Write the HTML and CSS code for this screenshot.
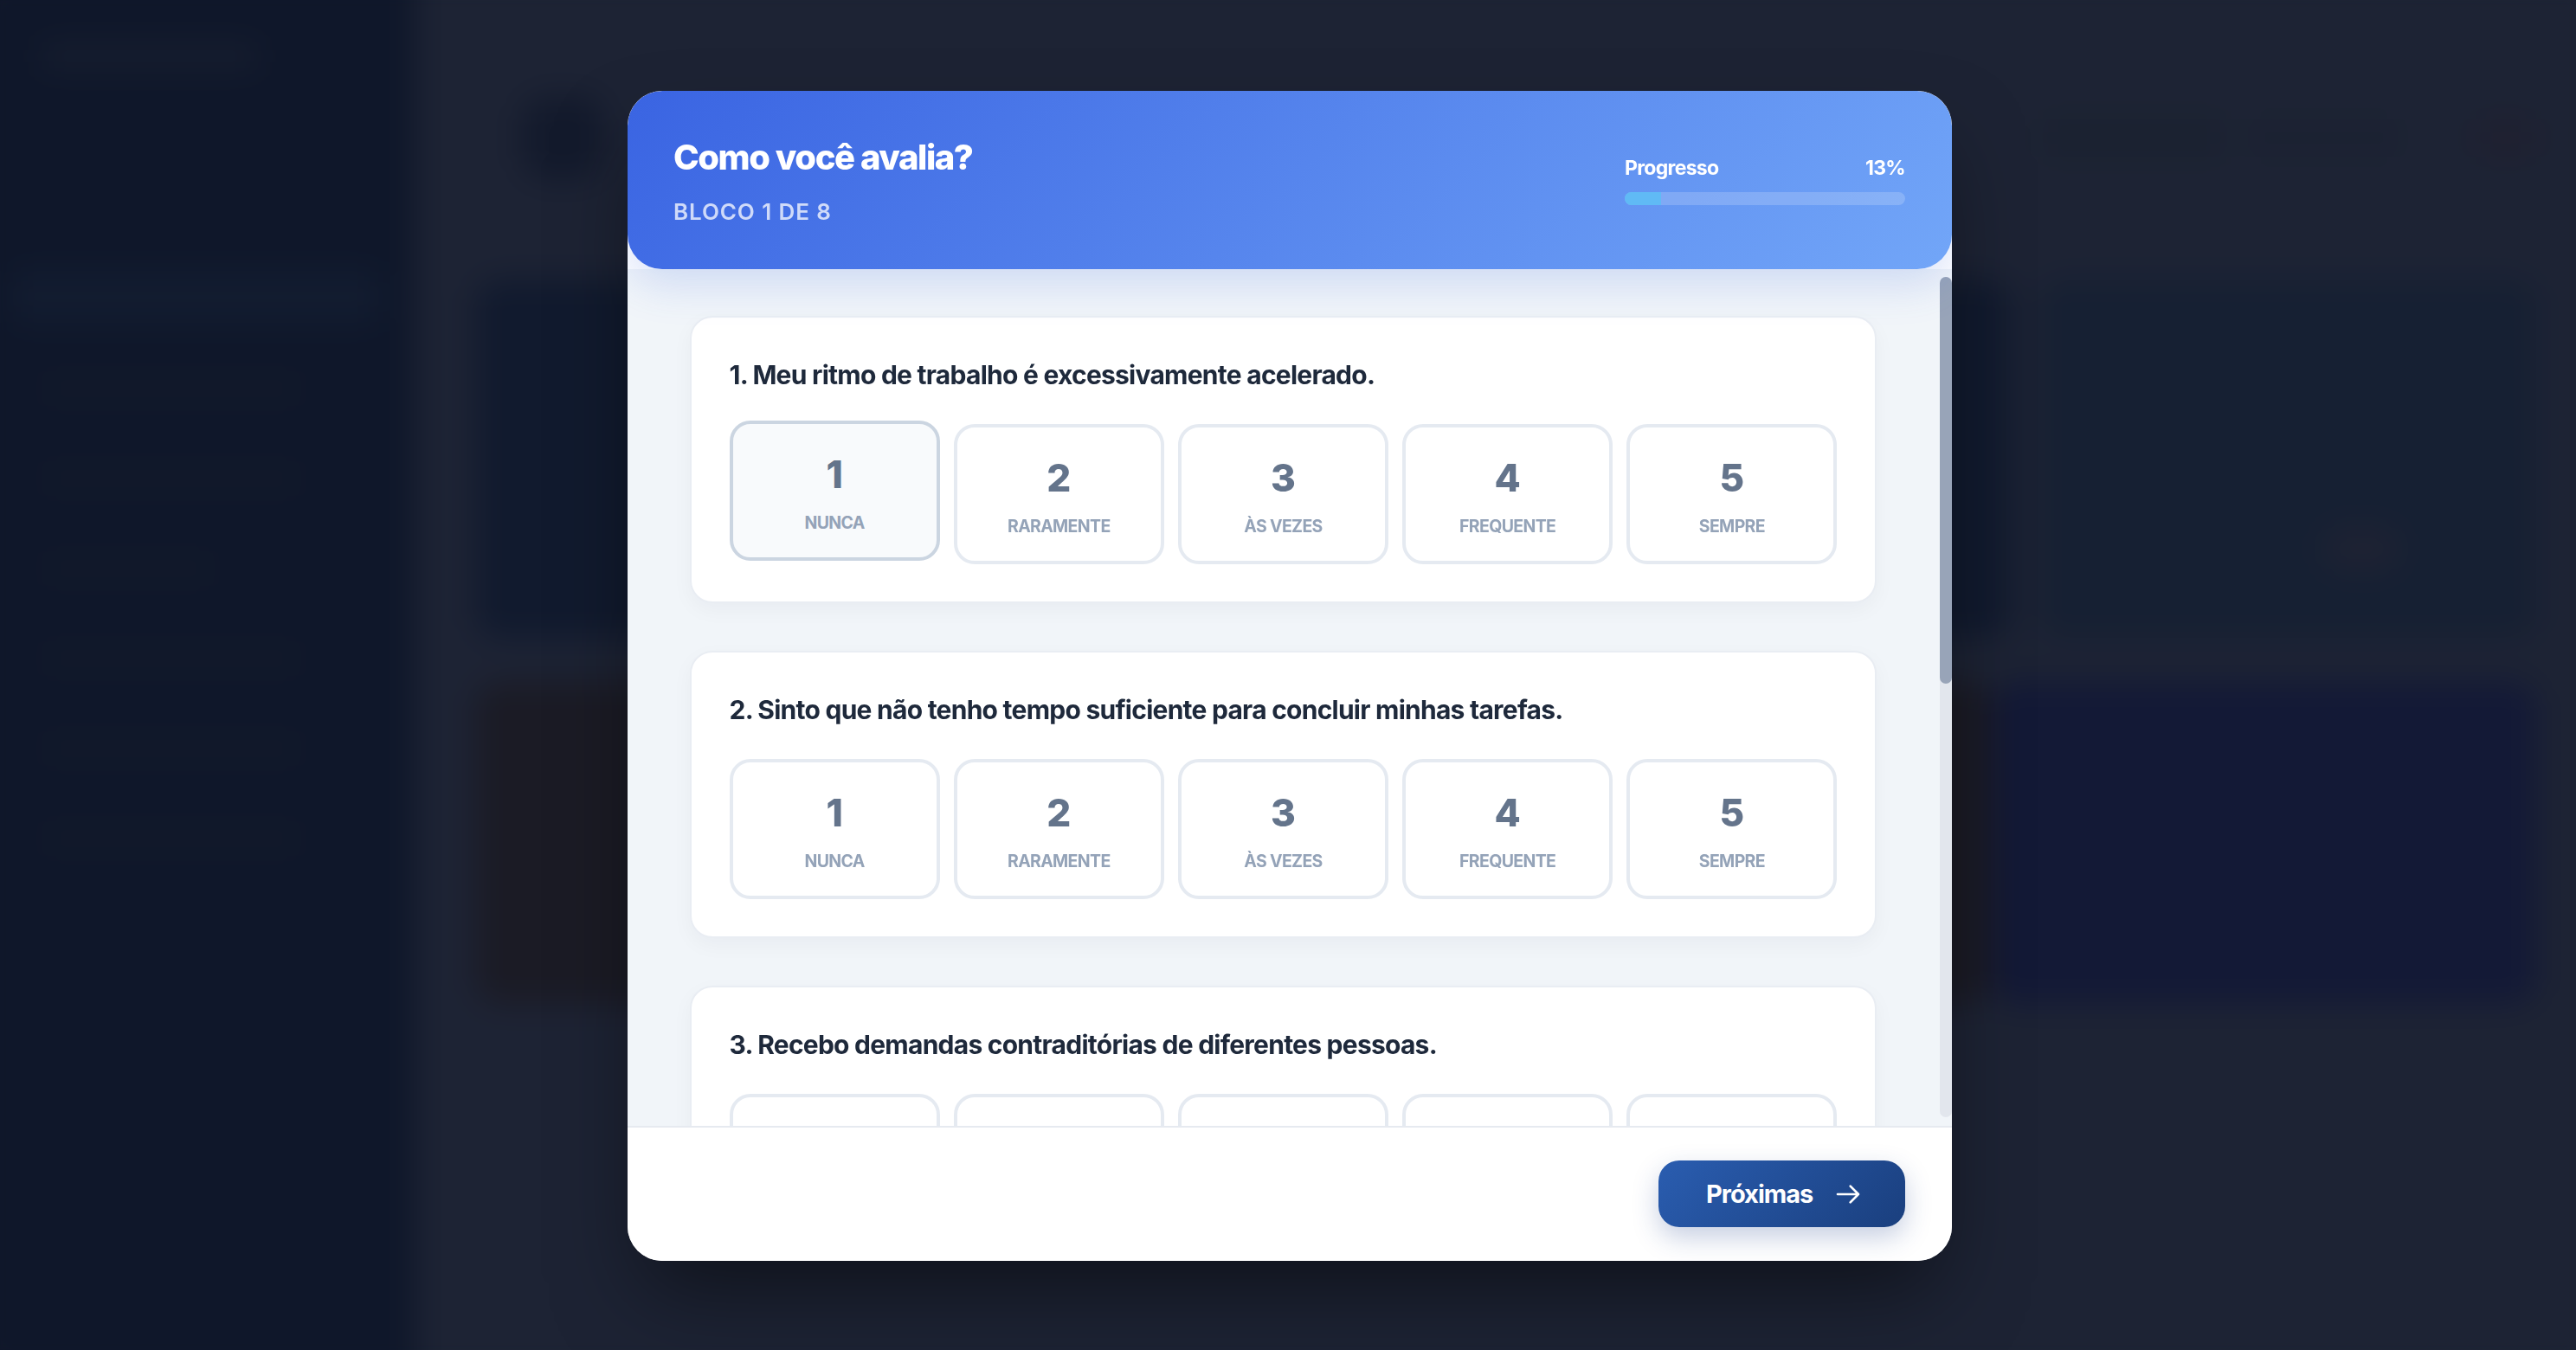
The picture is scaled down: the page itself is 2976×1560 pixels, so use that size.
FILE: index.html
```html
<!DOCTYPE html>
<html lang="pt-BR">
<head>
<meta charset="utf-8">
<title>Como você avalia?</title>
<link rel="stylesheet" href="styles.css">
</head>
<body>
<div class="dashboard" aria-hidden="true">
  <aside class="sidebar">
    <div class="brand"></div>
    <div class="nav-active"></div>
    <div class="nav-line"></div>
    <div class="nav-line"></div>
    <div class="nav-line short"></div>
    <div class="nav-line"></div>
    <div class="nav-line"></div>
    <div class="nav-line"></div>
  </aside>
  <main class="main">
    <div class="topbar">
      <div class="avatar"></div>
      <div class="top-actions"><span class="pill"></span><span class="pill wide"></span><span class="dot"></span></div>
    </div>
    <div class="row-one">
      <div class="panel blue"></div>
      <div class="panel slate"><span class="spot"></span></div>
    </div>
    <div class="row-two">
      <div class="panel warm"></div>
      <div class="panel indigo"></div>
    </div>
  </main>
</div>

<div class="overlay">
  <section class="modal">
    <header class="modal-header">
      <div class="heading">
        <h1 class="title">Como você avalia?</h1>
        <p class="subtitle">BLOCO 1 DE 8</p>
      </div>
      <div class="progress">
        <div class="progress-text"><span>Progresso</span><span>13%</span></div>
        <div class="progress-track"><div class="progress-fill" style="width:13%"></div></div>
      </div>
    </header>

    <div class="modal-body">
      <div class="questions">
        <article class="question">
          <h2 class="question-text">1. Meu ritmo de trabalho é excessivamente acelerado.</h2>
          <div class="options">
            <button class="option selected"><span class="num">1</span><span class="label">Nunca</span></button>
            <button class="option"><span class="num">2</span><span class="label">Raramente</span></button>
            <button class="option"><span class="num">3</span><span class="label">Às vezes</span></button>
            <button class="option"><span class="num">4</span><span class="label">Frequente</span></button>
            <button class="option"><span class="num">5</span><span class="label">Sempre</span></button>
          </div>
        </article>
        <article class="question">
          <h2 class="question-text">2. Sinto que não tenho tempo suficiente para concluir minhas tarefas.</h2>
          <div class="options">
            <button class="option"><span class="num">1</span><span class="label">Nunca</span></button>
            <button class="option"><span class="num">2</span><span class="label">Raramente</span></button>
            <button class="option"><span class="num">3</span><span class="label">Às vezes</span></button>
            <button class="option"><span class="num">4</span><span class="label">Frequente</span></button>
            <button class="option"><span class="num">5</span><span class="label">Sempre</span></button>
          </div>
        </article>
        <article class="question">
          <h2 class="question-text">3. Recebo demandas contraditórias de diferentes pessoas.</h2>
          <div class="options">
            <button class="option"><span class="num">1</span><span class="label">Nunca</span></button>
            <button class="option"><span class="num">2</span><span class="label">Raramente</span></button>
            <button class="option"><span class="num">3</span><span class="label">Às vezes</span></button>
            <button class="option"><span class="num">4</span><span class="label">Frequente</span></button>
            <button class="option"><span class="num">5</span><span class="label">Sempre</span></button>
          </div>
        </article>
      </div>
    </div>

    <div class="scrollbar"><div class="scrollbar-thumb"></div></div>

    <footer class="modal-footer">
      <button class="next">
        <span>Próximas</span>
        <svg class="next-icon" viewBox="0 0 24 24" fill="none" stroke="currentColor" stroke-width="2" stroke-linecap="round" stroke-linejoin="round"><path d="M14 5l7 7m0 0l-7 7m7-7H3"/></svg>
      </button>
    </footer>
  </section>
</div>
</body>
</html>
```

FILE: styles.css
```css
* { box-sizing: border-box; margin: 0; padding: 0; }

html, body {
  height: 100%;
  overflow: hidden;
  background: #1c2333;
}

body {
  font-family: "Inter", "Liberation Sans", sans-serif;
}

/* Blurred dashboard behind the dialog: bleeds past the window so the blur has no soft edge */
.dashboard {
  display: grid;
  grid-template-columns: 510px 1fr;
  margin: -30px;
  height: calc(100% + 60px);
  filter: blur(18px);
}

.sidebar {
  background: #0f172a;
  padding: 82px 58px 0 78px;
  display: flex;
  flex-direction: column;
}

.brand {
  width: 250px;
  height: 26px;
  margin: 0 0 235px 0;
  background: #171e2f;
  border-radius: 8px;
}

.nav-active {
  height: 60px;
  margin: 0 0 66px -33px;
  width: 422px;
  border-radius: 12px;
  background: #121c30;
}

.nav-line {
  height: 20px;
  width: 300px;
  margin: 0 0 84px 0;
  border-radius: 8px;
  background: #131a2b;
}

.nav-line.short { width: 200px; }

.main {
  padding: 154px 76px 0 70px;
  display: flex;
  flex-direction: column;
  background: #1d2334;
}

.topbar {
  display: flex;
  justify-content: space-between;
  align-items: center;
  height: 70px;
  margin-bottom: 129px;
}

.avatar {
  width: 96px;
  height: 96px;
  margin-left: 52px;
  border-radius: 30px;
  background: #131a2c;
}

.top-actions { display: flex; gap: 30px; align-items: center; }

.pill {
  width: 210px;
  height: 44px;
  border-radius: 14px;
  background: #1a2230;
}

.pill.wide { width: 170px; background: #1b2232; }

.dot {
  width: 70px;
  height: 44px;
  border-radius: 14px;
  background: #1f2030;
  margin-left: 60px;
}

.row-one {
  display: grid;
  grid-template-columns: 1fr 574px;
  gap: 33px;
  height: 414px;
  margin-bottom: 51px;
}

.row-two {
  display: grid;
  grid-template-columns: 1fr 630px;
  gap: 0;
  height: 372px;
}

.panel {
  border-radius: 28px;
  position: relative;
}

.blue { background: #111a2e; }
.slate { background: #162033; }
.warm { background: #1b1b25; }
.indigo { background: #131936; }

.spot {
  position: absolute;
  left: 327px;
  top: 286px;
  width: 90px;
  height: 50px;
  border-radius: 30px;
  background: #1e2233;
}

/* Dialog */
.overlay {
  position: fixed;
  inset: 0;
  display: flex;
  align-items: center;
  justify-content: center;
  padding: 2px 0 0 4px;
}

.modal {
  position: relative;
  width: 1530px;
  height: 1352px;
  display: flex;
  flex-direction: column;
  background: #fff;
  border-radius: 40px;
  overflow: hidden;
  box-shadow: 0 50px 100px -20px rgba(0, 0, 0, .5);
}

.modal-header {
  flex: none;
  height: 206px;
  padding: 0 54px 0 53px;
  display: flex;
  justify-content: space-between;
  align-items: center;
  background: linear-gradient(135deg, #3a64e2, #72a6f8);
  border-radius: 40px;
  position: relative;
  z-index: 2;
  box-shadow: 0 16px 50px rgba(59, 103, 227, .2);
}

.heading { display: flex; flex-direction: column; gap: 24px; margin-top: 2px; }

.title {
  font-size: 40px;
  line-height: 48px;
  font-weight: 800;
  color: #fff;
  letter-spacing: -1.45px;
}

.subtitle {
  font-size: 26px;
  line-height: 30px;
  font-weight: 600;
  color: rgba(255, 255, 255, .75);
  letter-spacing: .9px;
}

.progress {
  width: 324px;
}

.progress-text {
  display: flex;
  justify-content: space-between;
  font-size: 23px;
  line-height: 30px;
  font-weight: 700;
  color: #fff;
  letter-spacing: -.7px;
  margin-bottom: 13px;
}

.progress-track {
  height: 15px;
  border-radius: 8px;
  background: rgba(255, 255, 255, .18);
  overflow: hidden;
}

.progress-fill {
  height: 100%;
  background: #60baf5;
}

.modal-body {
  flex: 1;
  min-height: 0;
  background: #f1f5f9;
  overflow: hidden;
  padding: 54px 87px 0 72px;
}

.scrollbar {
  position: absolute;
  top: 215px;
  right: 0;
  width: 14px;
  height: 971px;
  border-radius: 8px;
  background: #e2e6ed;
  z-index: 1;
}

.scrollbar-thumb {
  height: 470px;
  border-radius: 8px;
  background: #98a4b8;
}

.questions {
  display: flex;
  flex-direction: column;
  gap: 55px;
}

.question {
  height: 332px;
  flex: none;
  padding: 0 43.5px;
  background: #fff;
  border: 2px solid #e9edf3;
  border-radius: 26px;
  box-shadow: 0 8px 24px rgba(15, 23, 42, .04);
}

.question-text {
  font-size: 30px;
  line-height: 40px;
  font-weight: 700;
  color: #1e293b;
  letter-spacing: -.75px;
  margin: 46px 0 37px;
}

.options {
  display: grid;
  grid-template-columns: repeat(5, 1fr);
  gap: 16px;
}

.option {
  height: 162px;
  display: flex;
  flex-direction: column;
  align-items: center;
  background: #fff;
  border: 4px solid #e5eaf1;
  border-radius: 24px;
  font-family: inherit;
}

.option.selected {
  background: #f8fafc;
  border-color: #cbd5e1;
  transform: translateY(-4px);
}

.num {
  margin-top: 32px;
  font-size: 44px;
  line-height: 52px;
  font-weight: 800;
  color: #64748b;
}

.label {
  margin-top: 18px;
  font-size: 19.5px;
  line-height: 24px;
  font-weight: 700;
  color: #94a3b8;
  text-transform: uppercase;
  letter-spacing: -.65px;
}

.modal-footer {
  flex: none;
  height: 156px;
  padding: 38px 54px 0 0;
  display: flex;
  justify-content: flex-end;
  align-items: flex-start;
  background: #fff;
  border-top: 2px solid #e6eaf0;
  position: relative;
  z-index: 2;
}

.next {
  width: 285px;
  height: 77px;
  padding: 0 50px 0 55px;
  display: flex;
  align-items: center;
  justify-content: space-between;
  border: 0;
  border-radius: 24px;
  background: linear-gradient(135deg, #2a5db0, #1a3f7e);
  color: #fff;
  font-family: inherit;
  font-size: 29px;
  font-weight: 700;
  letter-spacing: -1px;
  box-shadow: 0 12px 30px rgba(30, 64, 140, .25);
}

.next-icon { width: 32px; height: 32px; flex: none; }
```
